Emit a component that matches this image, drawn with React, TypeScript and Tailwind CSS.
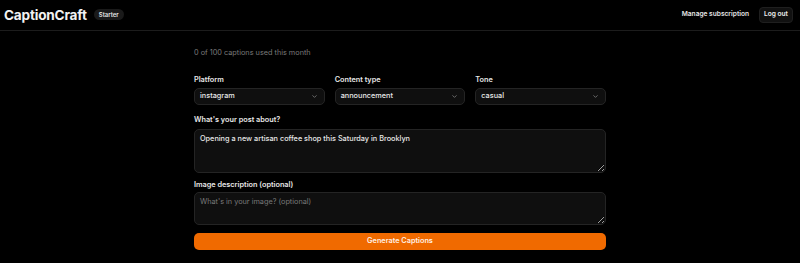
import { ChevronDown } from 'lucide-react';

const font = { fontFamily: 'Inter, "Liberation Sans", sans-serif' };

function SelectField({ label, value }: { label: string; value: string }) {
  return (
    <div className="flex flex-col">
      <span className="text-[7.3px] font-semibold text-[#e8e8e8] leading-[10px] mb-[3px]">{label}</span>
      <div className="flex items-center justify-between h-[17px] rounded-[5px] border border-[#242424] bg-[#0f0f0f] pl-[5px] pr-[6px]">
        <span className="text-[7.3px] font-medium text-[#e8e8e8]">{value}</span>
        <ChevronDown className="w-[7px] h-[7px] text-[#8a8a8a]" strokeWidth={2.5} />
      </div>
    </div>
  );
}

export default function App() {
  return (
    <div className="min-h-[263px] bg-black text-white" style={font}>
      {/* Header */}
      <header className="flex items-center justify-between h-[31px] border-b border-[#1c1c1c] pl-[4px] pr-[7px]">
        <div className="flex items-center gap-[7px]">
          <span className="text-[13.6px] font-bold tracking-[-0.2px] text-[#f2f2f2]">CaptionCraft</span>
          <span className="rounded-full bg-[#1a1a1a] px-[5px] h-[11px] flex items-center text-[6px] font-semibold text-[#e5e5e5]">Starter</span>
        </div>
        <div className="flex items-center gap-[10px]">
          <span className="text-[6.6px] font-semibold text-[#e5e5e5]">Manage subscription</span>
          <button className="rounded-[4px] border border-[#1f1f1f] bg-[#111] w-[34px] h-[16px] text-[6.6px] font-semibold text-[#f0f0f0]">
            Log out
          </button>
        </div>
      </header>

      <main className="w-[412px] mx-auto pt-[17px]">
        <p className="text-[7.3px] text-[#7a7a7a] leading-[10px]">0 of 100 captions used this month</p>

        <div className="grid grid-cols-3 gap-[10px] mt-[17px]">
          <SelectField label="Platform" value="instagram" />
          <SelectField label="Content type" value="announcement" />
          <SelectField label="Tone" value="casual" />
        </div>

        <div className="flex flex-col mt-[10px]">
          <span className="text-[7.3px] font-semibold text-[#e8e8e8] leading-[10px] mb-[4px]">What&apos;s your post about?</span>
          <textarea
            defaultValue="Opening a new artisan coffee shop this Saturday in Brooklyn"
            className="block h-[44px] rounded-[5px] border border-[#242424] bg-[#0f0f0f] px-[5px] py-[4px] text-[7.3px] leading-[10px] font-medium text-[#e8e8e8] outline-none resize-y"
          />
        </div>

        <div className="flex flex-col mt-[7px]">
          <span className="text-[7.3px] font-semibold text-[#e8e8e8] leading-[10px] mb-[2px]">Image description (optional)</span>
          <textarea
            placeholder="What's in your image? (optional)"
            className="block h-[33px] rounded-[5px] border border-[#242424] bg-[#0f0f0f] px-[5px] py-[4px] text-[7.3px] leading-[10px] text-[#e8e8e8] placeholder:text-[#7a7a7a] outline-none resize-y"
          />
        </div>

        <button className="block mt-[8px] w-full h-[17px] rounded-[5px] bg-[#f06a00] text-[7.3px] font-semibold text-[#fff1e6]">
          Generate Captions
        </button>
      </main>
    </div>
  );
}
